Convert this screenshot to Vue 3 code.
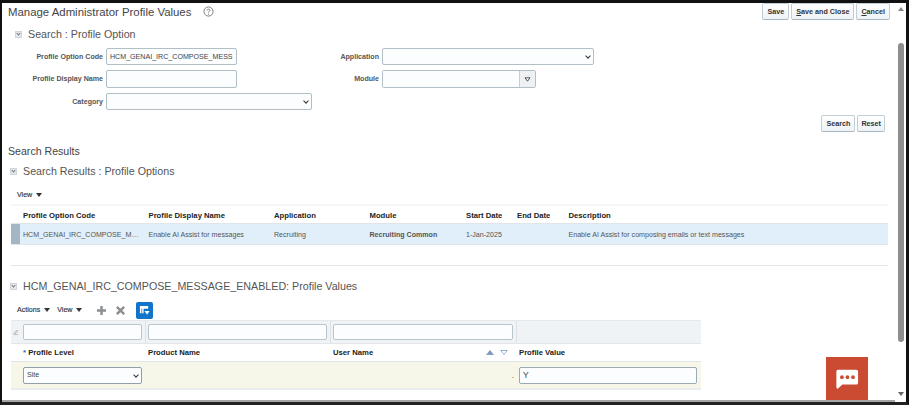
<template>
  <div class="frame">
    <main class="page">
      <header class="title-bar">
        <h1>Manage Administrator Profile Values</h1>
        <svg class="help" viewBox="0 0 12 12" width="11" height="11">
          <circle cx="6" cy="6" r="5" fill="none" stroke="#666" stroke-width="0.9" />
          <path d="M4.5 4.8C4.5 3 7.6 3 7.6 4.7C7.6 5.9 6 5.8 6 7.1" fill="none" stroke="#666" stroke-width="0.9" />
          <circle cx="6" cy="8.8" r="0.6" fill="#666" />
        </svg>
        <div class="page-actions">
          <button type="button" class="btn">Save</button>
          <button type="button" class="btn"><u>S</u>ave and Close</button>
          <button type="button" class="btn"><u>C</u>ancel</button>
        </div>
      </header>

      <section class="search">
        <div class="section-head">
          <span class="toggle"></span>
          <h2>Search : Profile Option</h2>
        </div>
        <div class="form">
          <div class="form-col">
            <label class="field short">
              <span class="lbl lbl-left">Profile Option Code</span>
              <input class="inp w-131" value="HCM_GENAI_IRC_COMPOSE_MESS" />
            </label>
            <label class="field">
              <span class="lbl lbl-left">Profile Display Name</span>
              <input class="inp w-131" />
            </label>
            <label class="field short">
              <span class="lbl lbl-left">Category</span>
              <span class="inp sel w-206"><i class="chev"></i></span>
            </label>
          </div>
          <div class="form-col second">
            <label class="field short">
              <span class="lbl lbl-right">Application</span>
              <span class="inp sel w-212"><i class="chev"></i></span>
            </label>
            <label class="field">
              <span class="lbl lbl-right">Module</span>
              <span class="combo">
                <span class="combo-text"></span>
                <span class="combo-btn">
                  <svg viewBox="0 0 8 6" width="7" height="5"><path d="M1 1H7L4 5Z" fill="#fff" stroke="#333" stroke-width="1" /></svg>
                </span>
              </span>
            </label>
          </div>
        </div>
        <div class="search-actions">
          <button type="button" class="btn">Search</button>
          <button type="button" class="btn reset">Reset</button>
        </div>
      </section>

      <div class="results-title">Search Results</div>
      <div class="section-head results-head">
        <span class="toggle"></span>
        <h2>Search Results : Profile Options</h2>
      </div>
      <div class="toolbar view-bar">
        <span class="menu">View <i class="caret"></i></span>
      </div>
      <div class="options-table">
        <div class="row head">
          <div v-for="col in optionCols" :key="col.label" class="cell" :style="{ width: col.width + 'px' }">{{ col.label }}</div>
        </div>
        <div class="row selected">
          <div v-for="col in optionCols" :key="col.label" class="cell" :class="{ strong: col.strong }" :style="{ width: col.width + 'px' }">{{ col.value }}</div>
        </div>
      </div>
      <div class="rule"></div>

      <div class="section-head values-head">
        <span class="toggle"></span>
        <h2>HCM_GENAI_IRC_COMPOSE_MESSAGE_ENABLED: Profile Values</h2>
      </div>
      <div class="toolbar actions-bar">
        <span class="menu">Actions <i class="caret"></i></span>
        <span class="menu">View <i class="caret"></i></span>
        <svg class="tool-icon plus" viewBox="0 0 11 11" width="9" height="9"><path d="M5.5 0V11M0 5.5H11" stroke="#8b8f92" stroke-width="3" /></svg>
        <svg class="tool-icon" viewBox="0 0 11 11" width="9" height="9"><path d="M1 1L10 10M10 1L1 10" stroke="#8b8f92" stroke-width="3" /></svg>
        <span class="freeze">
          <svg viewBox="0 0 12 12" width="11" height="11">
            <path d="M1 1H10V4H1ZM1 4H5V9H1Z" fill="#fff" />
            <path d="M3 4V9" stroke="#1074c8" stroke-width="0.8" />
            <path d="M6 6.5H11.5L8.8 10.5Z" fill="#fff" />
          </svg>
        </span>
      </div>
      <div class="values-table">
        <div class="filter-row">
          <span class="edit-mark">
            <svg viewBox="0 0 8 8" width="6" height="6"><path d="M1 6L5.5 1.5L6.5 2.5L2 7ZM1 7.6H7" fill="none" stroke="#999" stroke-width="0.9" /></svg>
          </span>
          <span class="filter-cell f-c1"><span class="filter-inp"></span></span>
          <span class="filter-cell f-c2"><span class="filter-inp"></span></span>
          <span class="filter-cell f-c3"><span class="filter-inp"></span></span>
        </div>
        <div class="val-head">
          <span class="edit-mark"></span>
          <span class="val-cell w-c1"><b class="req">*</b> Profile Level</span>
          <span class="val-cell w-c2">Product Name</span>
          <span class="val-cell w-c3 sortable">
            User Name
            <span class="sort">
              <svg viewBox="0 0 10 6" width="8" height="5"><path d="M0 6L5 0L10 6Z" fill="#7d9cc0" /></svg>
              <svg viewBox="0 0 10 6" width="8" height="5"><path d="M1 .5H9L5 5.5Z" fill="none" stroke="#7d9cc0" /></svg>
            </span>
          </span>
          <span class="val-cell">Profile Value</span>
        </div>
        <div class="val-row">
          <span class="edit-mark"></span>
          <span class="val-cell w-c1"><span class="inp sel site">Site<i class="chev"></i></span></span>
          <span class="val-cell w-c2"></span>
          <span class="val-cell w-c3 dot">.</span>
          <span class="val-cell"><span class="inp value">Y</span></span>
        </div>
      </div>
    </main>

    <aside class="scrollbar">
      <span class="arrow up"></span>
      <span class="track"><span class="thumb"></span></span>
      <span class="arrow down"></span>
    </aside>

    <button type="button" class="chat" aria-label="Chat">
      <svg viewBox="0 0 26 22" width="24" height="22">
        <path d="M3 1H23Q25 1 25 3V15Q25 17 23 17H8L3 21.5Q1.5 21.5 1.5 20V3Q1.5 1 3 1Z" fill="#fff" />
        <circle cx="7.5" cy="9" r="2" fill="#cb4a32" />
        <circle cx="13.5" cy="9" r="2" fill="#cb4a32" />
        <circle cx="19.5" cy="9" r="2" fill="#cb4a32" />
      </svg>
    </button>
  </div>
</template>

<script setup>
const optionCols = [
  { label: 'Profile Option Code', value: 'HCM_GENAI_IRC_COMPOSE_M\u2026', width: 125.5 },
  { label: 'Profile Display Name', value: 'Enable AI Assist for messages', width: 125.5 },
  { label: 'Application', value: 'Recruiting', width: 95.5 },
  { label: 'Module', value: 'Recruiting Common', width: 96.5, strong: true },
  { label: 'Start Date', value: '1-Jan-2025', width: 51 },
  { label: 'End Date', value: '', width: 51.5 },
  { label: 'Description', value: 'Enable AI Assist for composing emails or text messages', width: 310 }
]
</script>

<style>
html,
body {
  margin: 0;
  background: #fff;
}
</style>

<style scoped>
* {
  box-sizing: border-box;
}
.frame {
  position: relative;
  display: flex;
  width: 909px;
  height: 405px;
  overflow: hidden;
  background: #fff;
  border-top: 3px solid #111;
  border-left: 2px solid #111;
  border-right: 3px solid #111;
  border-bottom: 3px solid #222;
  box-shadow: inset 0 -2px 0 #a5a5a5;
  font-family: "Liberation Sans", Arial, sans-serif;
  color: #333;
}
.page {
  flex: 1;
  min-width: 0;
  padding-left: 6px;
  padding-right: 5px;
}
.title-bar {
  display: flex;
  align-items: center;
  height: 17px;
}
h1 {
  margin: 0;
  font-size: 11.4px;
  font-weight: 400;
  color: #444;
}
.help {
  margin-left: 12px;
}
.page-actions {
  display: flex;
  gap: 2px;
  margin-left: auto;
}
.btn {
  height: 17px;
  padding: 0 4px;
  border: 1px solid #c1ced6;
  border-bottom-color: #a9b8c2;
  border-radius: 2px;
  background: linear-gradient(#fff, #eef2f5);
  font: 700 7.2px "Liberation Sans", Arial, sans-serif;
  color: #333;
}
.reset {
  padding: 0 3px;
}
.search {
  padding-top: 7px;
}
.section-head {
  display: flex;
  align-items: center;
  height: 14px;
}
.toggle {
  position: relative;
  width: 7px;
  height: 7px;
  margin-right: 6px;
  background: #e4e8ec;
  border: 1px solid #d0d5d9;
}
.toggle::after {
  content: "";
  position: absolute;
  left: 1px;
  top: 0;
  width: 2px;
  height: 2px;
  border-right: 1px solid #777;
  border-bottom: 1px solid #777;
  transform: rotate(45deg);
}
h2 {
  margin: 0;
  font-size: 10.7px;
  font-weight: 400;
  color: #555;
}
.search .toggle {
  margin-left: 7px;
  margin-right: 6px;
}
.form {
  display: flex;
  padding-top: 7px;
}
.form-col {
  display: flex;
  flex-direction: column;
  gap: 5px;
  width: 309px;
}
.second {
  width: 520px;
  margin-left: -9px;
}
.field {
  display: flex;
  align-items: center;
  height: 18px;
}
.short {
  height: 17px;
}
.lbl {
  font-size: 7.1px;
  font-weight: 700;
  color: #555;
  text-align: right;
  padding-right: 3px;
}
.lbl-left {
  width: 98px;
}
.lbl-right {
  width: 74px;
}
.inp {
  display: block;
  position: relative;
  height: 100%;
  padding: 0 3px;
  border: 1px solid #b1bfc7;
  border-radius: 2px;
  background: #fcfdfe;
  font: 400 7.1px "Liberation Sans", Arial, sans-serif;
  color: #444;
  outline: none;
}
.w-131 {
  width: 131px;
}
.w-206 {
  width: 206px;
}
.w-212 {
  width: 212px;
}
.chev {
  position: absolute;
  right: 3px;
  top: 50%;
  width: 4px;
  height: 4px;
  margin-top: -3px;
  border-right: 1.5px solid #333;
  border-bottom: 1.5px solid #333;
  transform: rotate(45deg);
}
.combo {
  display: flex;
  width: 154px;
  height: 18px;
  border: 1px solid #b1bfc7;
  border-radius: 2px;
}
.combo-text {
  flex: 1;
  background: #fcfdfe;
}
.combo-btn {
  display: flex;
  align-items: center;
  justify-content: center;
  width: 16px;
  border-left: 1px solid #c3ced5;
  background: #eef1f3;
}
.search-actions {
  display: flex;
  justify-content: flex-end;
  gap: 2px;
  padding-top: 5px;
  padding-right: 5px;
}
.results-title {
  margin-top: 12px;
  font-size: 10.6px;
  line-height: 14px;
  color: #444;
}
.results-head {
  margin-top: 6px;
}
.results-head .toggle,
.values-head .toggle {
  margin-left: 2px;
}
.toolbar {
  display: flex;
  align-items: center;
}
.view-bar {
  height: 14px;
  margin-top: 10px;
  padding-left: 9px;
}
.menu {
  font-size: 7.1px;
  color: #333;
  -webkit-text-stroke: 0.15px #333;
}
.caret {
  display: inline-block;
  margin-left: 2px;
  width: 0;
  height: 0;
  border-left: 3px solid transparent;
  border-right: 3px solid transparent;
  border-top: 4px solid #333;
}
.options-table {
  margin-left: 3px;
  margin-top: 2px;
  width: 877px;
  border-top: 2px solid #f4f6f7;
}
.row {
  display: flex;
  padding-left: 12px;
  padding-top: 1px;
  align-items: center;
}
.head {
  height: 18px;
  border-bottom: 1px solid #dfe5e9;
  font-size: 7.7px;
  font-weight: 700;
  color: #222;
}
.selected {
  height: 21px;
  font-size: 7.1px;
  color: #555;
  background: linear-gradient(90deg, #a3b6c6 0 9px, #e1effb 9px);
  border-bottom: 1px solid #dfe5e9;
}
.cell {
  flex: none;
  white-space: nowrap;
}
.strong {
  font-weight: 700;
}
.rule {
  width: 877px;
  margin-left: 3px;
  margin-top: 20px;
  border-top: 1px solid #e3e8eb;
}
.values-head {
  margin-top: 13px;
}
.actions-bar {
  margin-top: 7px;
  height: 20px;
  padding-left: 9px;
}
.actions-bar .menu + .menu {
  margin-left: 7px;
}
.tool-icon {
  margin-left: 10px;
}
.plus {
  margin-left: 15px;
}
.freeze {
  display: flex;
  align-items: center;
  justify-content: center;
  width: 17px;
  height: 17px;
  margin-left: 11px;
  border-radius: 2px;
  background: #1074c8;
}
.values-table {
  margin-left: 3px;
  width: 877px;
}
.filter-row,
.val-head,
.val-row {
  display: flex;
}
.filter-row {
  width: 690px;
  height: 24px;
  background: #f0f3f6;
  border-top: 1px solid #e5e9ec;
  border-bottom: 1px solid #e1e6ea;
}
.edit-mark {
  display: flex;
  align-items: center;
  justify-content: flex-end;
  flex: none;
  width: 12px;
  padding-right: 4px;
}
.w-c1 {
  flex: none;
  width: 125px;
}
.w-c2 {
  flex: none;
  width: 185px;
}
.w-c3 {
  flex: none;
  width: 186px;
}
.filter-cell {
  flex: none;
  padding: 3px 3px 3px 0;
  border-right: 1px solid #dde2e6;
  margin-right: 2px;
}
.f-c1 {
  width: 123px;
}
.f-c2 {
  width: 183px;
}
.f-c3 {
  width: 184px;
}
.filter-inp {
  display: block;
  height: 100%;
  border: 1px solid #b9c5cc;
  border-radius: 2px;
  background: #fcfdfe;
}
.val-head {
  width: 690px;
  height: 18px;
  align-items: center;
  border-bottom: 1px solid #e1e6ea;
  font-size: 7.7px;
  font-weight: 700;
  color: #222;
}
.req {
  color: #1a6fb5;
}
.val-cell {
  display: block;
}
.sortable {
  display: flex;
  align-items: center;
  padding-right: 11px;
}
.sort {
  display: flex;
  gap: 6px;
  margin-left: auto;
}
.val-row {
  width: 690px;
  height: 28px;
  padding-top: 1px;
  align-items: center;
  background: #f6f7e9;
  border-bottom: 2px solid #e9ecee;
}
.site {
  width: 119px;
  height: 17px;
  line-height: 15px;
  border-color: #8fa0aa;
}
.value {
  width: 178px;
  height: 17px;
  line-height: 15px;
  border-color: #9aabb3;
  font-size: 8.5px;
}
.dot {
  text-align: right;
  padding-right: 5px;
  font-size: 8px;
  line-height: 18px;
}
.scrollbar {
  display: flex;
  flex-direction: column;
  flex: none;
  width: 11px;
  padding: 4px 2px 0 3px;
  background: #fff;
}
.arrow {
  flex: none;
  align-self: center;
  width: 0;
  height: 0;
  border-left: 3.5px solid transparent;
  border-right: 3.5px solid transparent;
}
.up {
  border-bottom: 4px solid #8a8a8a;
}
.down {
  margin-bottom: 6px;
  border-top: 4px solid #666;
}
.track {
  flex: 1;
  display: block;
  padding: 32px 0 50px;
}
.thumb {
  display: block;
  height: 100%;
  border-radius: 3px;
  background: #8e8e8e;
}
.chat {
  position: absolute;
  left: 824px;
  top: 354px;
  display: flex;
  align-items: center;
  justify-content: center;
  width: 42px;
  height: 43px;
  padding: 0;
  border: none;
  background: #cb4a32;
}
</style>
